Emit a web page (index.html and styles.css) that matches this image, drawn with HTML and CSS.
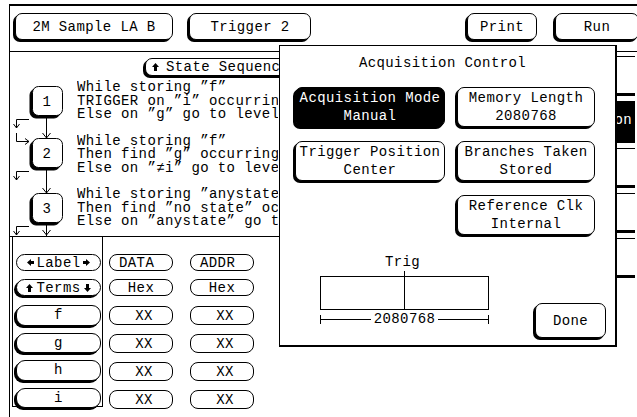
FILE: index.html
```html
<!DOCTYPE html>
<html>

<head>
    <meta charset="utf-8">
    <link rel="stylesheet" href="styles.css">
</head>

<body>
    <div class="screen">

        <header class="topbar">
            <div class="btn btn-module">2M Sample LA B</div>
            <div class="btn btn-menu">Trigger 2</div>
            <div class="btn btn-print">Print</div>
            <div class="btn btn-run">Run</div>
        </header>

        <div class="main">
            <div class="left">
                <section class="sequence">
                    <div class="btn btn-seq">
                        <svg class="arrow" width="7" height="8" viewBox="0 0 7 8"><path d="M3.5 0 L7 4 H5 V8 H2 V4 H0 Z" /></svg>
                        <span class="seq-title">State Sequence Levels</span>
                    </div>
                    <div class="seq-body">
                        <svg class="flow" width="67" height="157" viewBox="0 0 67 157">
                            <g fill="none" stroke="#000" stroke-width="1">
                                <!-- level boxes -->
                                <rect x="20" y="10" width="30" height="29" rx="6" fill="#000" />
                                <rect x="22.5" y="7.5" width="30" height="29" rx="6" fill="#fff" />
                                <rect x="20" y="62" width="30" height="29" rx="6" fill="#000" />
                                <rect x="22.5" y="59.5" width="30" height="29" rx="6" fill="#fff" />
                                <rect x="20" y="117" width="30" height="29" rx="6" fill="#000" />
                                <rect x="22.5" y="114.5" width="30" height="29" rx="6" fill="#fff" />
                                <!-- level to level -->
                                <path d="M36.5 39 V59 M32.5 54 L36.5 59 L40.5 54" />
                                <path d="M36.5 91 V114 M32.5 109 L36.5 114 L40.5 109" />
                                <path d="M36.5 146 V157 M32.5 151 L36.5 156 L40.5 151" />
                                <!-- else branches -->
                                <path d="M19 40.5 H6.5 V49 M3.5 45 L6.5 49 L9.5 45" />
                                <path d="M6.5 54 V62.5 H19 M15 59.5 L19 62.5 L15 65.5" />
                                <path d="M19 92.5 H6.5 V101 M3.5 97 L6.5 101 L9.5 97" />
                                <path d="M19 147.5 H6.5 V156 M3.5 152 L6.5 156 L9.5 152" />
                            </g>
                            <g class="flow-num">
                                <text x="37" y="27" text-anchor="middle">1</text>
                                <text x="37" y="79" text-anchor="middle">2</text>
                                <text x="37" y="134" text-anchor="middle">3</text>
                            </g>
                        </svg>
                        <div class="seq-text">
                            <div class="level">
                                <p>While storing ”f”</p>
                                <p>TRIGGER on ”i” occurring once</p>
                                <p>Else on ”g” go to level 2</p>
                            </div>
                            <div class="level">
                                <p>While storing ”f”</p>
                                <p>Then find ”g” occurring once</p>
                                <p>Else on ”≠i” go to level 1</p>
                            </div>
                            <div class="level">
                                <p>While storing ”anystate”</p>
                                <p>Then find ”no state” occurring once</p>
                                <p>Else on ”anystate” go to level 3</p>
                            </div>
                        </div>
                    </div>
                </section>

                <section class="terms">
                    <div class="term-names">
                        <div class="pill pill-flat">
                            <svg class="arrow" width="7" height="7" viewBox="0 0 7 7"><path d="M0 3.5 L4 0 V2 H7 V5 H4 V7 Z" /></svg>Label<svg class="arrow" width="7" height="7" viewBox="0 0 7 7"><path d="M7 3.5 L3 0 V2 H0 V5 H3 V7 Z" /></svg>
                        </div>
                        <div class="pill pill-terms">
                            <svg class="arrow" width="7" height="8" viewBox="0 0 7 8"><path d="M3.5 0 L7 4 H5 V8 H2 V4 H0 Z" /></svg> Terms <svg class="arrow" width="7" height="8" viewBox="0 0 7 8"><path d="M3.5 8 L7 4 H5 V0 H2 V4 H0 Z" /></svg>
                        </div>
                        <div class="pill pill-name">f</div>
                        <div class="pill pill-name">g</div>
                        <div class="pill pill-name">h</div>
                        <div class="pill pill-name">i</div>
                    </div>
                    <div class="term-col">
                        <div class="cell cell-label">DATA</div>
                        <div class="cell">Hex</div>
                        <div class="cell cell-val">XX</div>
                        <div class="cell cell-val">XX</div>
                        <div class="cell cell-val">XX</div>
                        <div class="cell cell-val">XX</div>
                    </div>
                    <div class="term-col">
                        <div class="cell cell-label">ADDR</div>
                        <div class="cell">Hex</div>
                        <div class="cell cell-val">XX</div>
                        <div class="cell cell-val">XX</div>
                        <div class="cell cell-val">XX</div>
                        <div class="cell cell-val">XX</div>
                    </div>
                </section>
            </div>

            <aside class="side">
                <div class="side-btn"></div>
                <div class="side-btn side-on">on</div>
                <div class="side-btn"></div>
                <div class="side-btn"></div>
                <div class="side-btn"></div>
            </aside>
        </div>

        <div class="dialog">
            <div class="dialog-title">Acquisition Control</div>
            <div class="dialog-grid">
                <div class="btn dbtn dbtn-on">Acquisition Mode<br>Manual</div>
                <div class="btn dbtn">Memory Length<br>2080768</div>
                <div class="btn dbtn">Trigger Position<br>Center</div>
                <div class="btn dbtn">Branches Taken<br>Stored</div>
                <div></div>
                <div class="btn dbtn">Reference Clk<br>Internal</div>
            </div>
            <div class="dialog-foot">
                <div class="trig">
                    <div class="trig-label">Trig</div>
                    <div class="trig-bar"></div>
                    <div class="trig-dim"><span>2080768</span></div>
                </div>
                <div class="btn btn-done">Done</div>
            </div>
        </div>

    </div>
</body>

</html>
```

FILE: styles.css
```css
body {
    margin: 0;
    width: 637px;
    height: 417px;
    overflow: hidden;
    background: #fff;
    color: #000;
    font-family: "Liberation Mono", "DejaVu Sans Mono", monospace;
    font-size: 14px;
    letter-spacing: 0.4px;
}

.screen {
    position: relative;
    width: 700px;
    height: 420px;
    margin: 4px 0 0 9px;
    border-top: 2px solid #000;
    border-left: 1px solid #000;
}

.btn {
    display: flex;
    align-items: center;
    justify-content: center;
    box-sizing: border-box;
    border: 1px solid #000;
    border-radius: 7px;
    box-shadow: -2px 2px 0 #000;
    background: #fff;
    white-space: nowrap;
}

.arrow {
    fill: #000;
    flex-shrink: 0;
}

/* top bar */

.topbar {
    display: flex;
    height: 46px;
    padding-top: 7px;
    box-sizing: border-box;
    border-bottom: 1px solid #000;
}

.topbar .btn {
    height: 27px;
}

.btn-module {
    width: 158px;
    margin-left: 5px;
}

.btn-menu {
    width: 122px;
    margin-left: 16px;
}

.btn-print {
    width: 70px;
    margin-left: 156px;
}

.btn-run {
    width: 84px;
    margin-left: 18px;
}

/* main area */

.main {
    display: flex;
}

.left {
    width: 590px;
    flex-shrink: 0;
}

.sequence {
    padding-top: 6px;
    border-bottom: 1px solid #000;
}

.btn-seq {
    justify-content: flex-start;
    width: 320px;
    height: 18px;
    margin-left: 135px;
    padding-left: 6px;
    gap: 7px;
}

.seq-title {
    width: 113px;
    overflow: hidden;
}

.seq-body {
    display: flex;
    height: 157px;
    margin-top: 3px;
}

.flow {
    flex-shrink: 0;
}

.flow-num {
    font-size: 14px;
}

.seq-text {
    width: 201px;
    overflow: hidden;
    padding-top: 2px;
    white-space: nowrap;
}

.level {
    margin-bottom: 13px;
}

.level p {
    margin: 0;
    line-height: 13.5px;
}

/* term table */

.terms {
    display: flex;
    height: 180px;
}

.term-names {
    display: flex;
    flex-direction: column;
    gap: 6px;
    width: 91px;
    height: 170px;
    margin-left: 2px;
    padding: 17px 0 0 3px;
    box-sizing: border-box;
    border-left: 1px solid #000;
    border-right: 1px solid #000;
    border-bottom: 1px solid #000;
}

.pill {
    display: flex;
    align-items: center;
    justify-content: center;
    box-sizing: border-box;
    width: 85px;
    height: 20px;
    border: 1px solid #000;
    border-radius: 9px;
    background: #fff;
}

.pill-flat {
    height: 17px;
    gap: 2px;
}

.pill-terms {
    height: 17px;
    margin-top: 2px;
    box-shadow: -2px 2px 0 #000;
    gap: 3px;
}

.pill-name {
    height: 21px;
    margin-top: 3px;
    margin-bottom: -2px;
    box-shadow: -2px 2px 0 #000;
}

.term-col {
    display: flex;
    flex-direction: column;
    gap: 8px;
    padding-top: 17px;
    margin-left: 6px;
}

.term-col + .term-col {
    margin-left: 17px;
}

.cell {
    display: flex;
    align-items: center;
    justify-content: center;
    box-sizing: border-box;
    width: 64px;
    height: 17px;
    border: 1px solid #000;
    border-radius: 8px;
}

.cell-label {
    justify-content: flex-start;
    padding-left: 9px;
}

.cell-val {
    height: 19px;
    margin-top: 2px;
    margin-bottom: -1px;
    padding-left: 6px;
}

/* right strip behind dialog */

.side {
    display: flex;
    flex-direction: column;
    gap: 5px;
    padding-top: 4px;
}

.side-btn {
    box-sizing: border-box;
    width: 35px;
    height: 40px;
    border-top: 1px solid #000;
    border-bottom: 3px solid #000;
    text-align: right;
    line-height: 36px;
    padding-right: 3px;
}

.side-on {
    height: 42px;
    background: #000;
    color: #fff;
}

/* dialog */

.dialog {
    position: absolute;
    left: 269px;
    top: 39px;
    width: 338px;
    height: 302px;
    box-sizing: border-box;
    border: 1px solid #000;
    border-right-width: 2px;
    border-bottom-width: 2px;
    background: #fff;
}

.dialog-title {
    text-align: center;
    line-height: 16px;
    padding: 9px 10px 0 0;
}

.dialog-grid {
    display: grid;
    grid-template-columns: 150px 138px;
    grid-auto-rows: 40px;
    column-gap: 12px;
    row-gap: 14px;
    margin: 16px 0 0 15px;
}

.dbtn {
    text-align: center;
    line-height: 18px;
}

.dbtn-on {
    background: #000;
    color: #fff;
}

.dialog-foot {
    display: flex;
    align-items: flex-start;
    justify-content: space-between;
    padding: 0 9px 0 40px;
}

.trig {
    width: 169px;
    margin-top: 20px;
}

.trig-label {
    text-align: center;
    line-height: 14px;
    padding-right: 4px;
}

.trig-bar {
    position: relative;
    height: 34px;
    margin-top: 7px;
    box-sizing: border-box;
    border: 1px solid #000;
}

.trig-bar::before {
    content: "";
    position: absolute;
    left: 83px;
    top: -6px;
    bottom: 0;
    border-left: 1px solid #000;
}

.trig-dim {
    display: flex;
    align-items: center;
    height: 9px;
    margin-top: 5px;
    border-left: 1px solid #000;
    border-right: 1px solid #000;
}

.trig-dim::before,
.trig-dim::after {
    content: "";
    flex: 1;
    border-top: 1px solid #000;
}

.trig-dim span {
    padding: 0 3px;
    line-height: 9px;
}

.btn-done {
    width: 71px;
    height: 35px;
    margin-top: 68px;
}
```
